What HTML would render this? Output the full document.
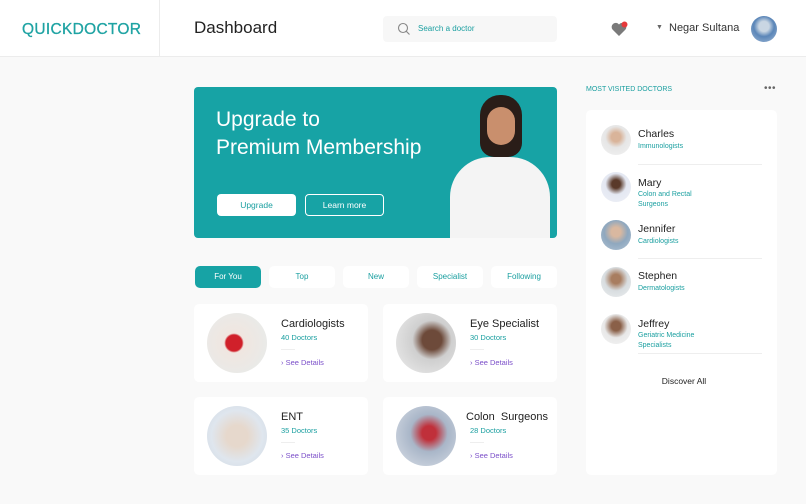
<!DOCTYPE html><html><head><style>
*{margin:0;padding:0;box-sizing:border-box}
body{width:806px;height:504px;background:#f9f9f9;font-family:"Liberation Sans",sans-serif;position:relative;overflow:hidden;color:#222}
.a{position:absolute}
.t{color:#1a9fa0}
.circ{position:absolute;border-radius:50%;overflow:hidden}
.tab{position:absolute;top:266px;width:66px;height:22px;border-radius:5px;background:#fff;color:#1a9fa0;font-size:8px;text-align:center;line-height:22px}
.card{position:absolute;width:174px;height:78px;background:#fff;border-radius:5px}
.card .ttl{position:absolute;left:87px;top:14px;font-size:11px;color:#222}
.card .sub{position:absolute;left:87px;top:29px;font-size:7.5px;color:#1a9fa0}
.card .ln{position:absolute;left:87px;top:45px;width:14px;height:1px;background:#eee}
.card .sd{position:absolute;left:87px;top:54px;font-size:7.5px;color:#7b4fc9}
.card .img{position:absolute;left:13px;top:9px;width:60px;height:60px;border-radius:50%}
.doc .n{position:absolute;left:638px;font-size:10.5px;color:#222}
.doc .s{position:absolute;left:638px;font-size:7px;color:#1a9fa0;line-height:10px}
.hr{position:absolute;left:638px;width:124px;height:1px;background:#eee}
</style></head><body>
<div class="a" style="left:0;top:0;width:806px;height:57px;background:#fff;border-bottom:1px solid #ececec"></div>
<div class="a" style="left:159px;top:0;width:1px;height:57px;background:#ececec"></div>
<div class="a t" style="left:22px;top:21px;font-size:15.5px;letter-spacing:0.3px;color:#1fa3a3;-webkit-text-stroke:0.3px #1fa3a3">QUICKDOCTOR</div>
<div class="a" style="left:194px;top:18px;font-size:17px;color:#222">Dashboard</div>
<div class="a" style="left:383px;top:16px;width:174px;height:26px;background:#f7f7f7;border-radius:4px"></div>
<svg class="a" style="left:397px;top:22px" width="14" height="14" viewBox="0 0 14 14"><circle cx="6" cy="6" r="4.5" fill="none" stroke="#888" stroke-width="1.1"/><line x1="9.3" y1="9.3" x2="12.5" y2="12.5" stroke="#888" stroke-width="1.1"/></svg>
<div class="a t" style="left:418px;top:24px;font-size:8px">Search a doctor</div>
<svg class="a" style="left:611px;top:21px" width="18" height="16" viewBox="0 0 18 16"><path d="M8 15 L1.5 8.5 A3.8 3.8 0 0 1 8 3.5 A3.8 3.8 0 0 1 14.5 8.5Z" fill="#7a7a7a"/><circle cx="13.5" cy="3.5" r="3" fill="#e5393b"/></svg>
<div class="a" style="left:656px;top:24px;font-size:7px;color:#666">▼</div>
<div class="a" style="left:669px;top:22px;font-size:11px;color:#333">Negar Sultana</div>
<div class="circ" style="left:751px;top:16px;width:26px;height:26px;background:radial-gradient(circle at 50% 40%,#c9d6e3 0 25%,#5b86b8 50%,#9fb8d6 100%)"></div>

<div class="a" style="left:194px;top:87px;width:363px;height:151px;background:#17a3a5;border-radius:4px;overflow:hidden">
<div class="a" style="left:22px;top:19px;color:#fff;font-size:21px;line-height:28px">Upgrade to<br>Premium Membership</div>
<div class="a" style="left:23px;top:107px;width:79px;height:22px;background:#fff;border-radius:4px;color:#1a9fa0;font-size:8.5px;text-align:center;line-height:22px">Upgrade</div>
<div class="a" style="left:111px;top:107px;width:79px;height:22px;border:1.2px solid #fff;border-radius:4px;color:#fff;font-size:8.5px;text-align:center;line-height:20px">Learn more</div>
<div class="a" style="left:256px;top:70px;width:100px;height:90px;background:#f4f4f4;border-radius:40px 40px 0 0"></div>
<div class="a" style="left:286px;top:8px;width:42px;height:62px;background:#2a1d18;border-radius:20px 20px 14px 14px"></div>
<div class="a" style="left:293px;top:20px;width:28px;height:38px;background:#c98f6d;border-radius:14px"></div>
</div>

<div class="tab" style="left:195px;background:#17a3a5;color:#fff">For You</div>
<div class="tab" style="left:269px">Top</div>
<div class="tab" style="left:343px">New</div>
<div class="tab" style="left:417px">Specialist</div>
<div class="tab" style="left:491px">Following</div>

<div class="card" style="left:194px;top:304px"><div class="img" style="background:radial-gradient(circle at 45% 50%,#d0202a 0 18%,#f0e6e0 22%,#e6ecec 100%)"></div><div class="ttl">Cardiologists</div><div class="sub">40 Doctors</div><div class="ln"></div><div class="sd">› See Details</div></div>
<div class="card" style="left:383px;top:304px"><div class="img" style="background:radial-gradient(circle at 60% 45%,#6d4a3a 0 20%,#cfcfcf 40%,#eeeeee 100%)"></div><div class="ttl">Eye Specialist</div><div class="sub">30 Doctors</div><div class="ln"></div><div class="sd">› See Details</div></div>
<div class="card" style="left:194px;top:397px"><div class="img" style="background:radial-gradient(circle at 50% 50%,#e6d8cc 0 25%,#dfe6ee 60%,#cfd8e2 100%)"></div><div class="ttl">ENT</div><div class="sub">35 Doctors</div><div class="ln"></div><div class="sd">› See Details</div></div>
<div class="card" style="left:383px;top:397px"><div class="img" style="background:radial-gradient(circle at 55% 45%,#c0303a 0 15%,#a9b6c8 40%,#dbe0e8 100%)"></div><div class="ttl" style="left:83px">Colon &nbsp;Surgeons</div><div class="sub">28 Doctors</div><div class="ln"></div><div class="sd">› See Details</div></div>

<div class="a t" style="left:586px;top:86px;font-size:7px">MOST VISITED DOCTORS</div>
<div class="a" style="left:764px;top:83px;font-size:10px;color:#666;letter-spacing:0.5px">•••</div>
<div class="a" style="left:586px;top:110px;width:191px;height:365px;background:#fff;border-radius:5px"></div>
<div class="doc">
<div class="circ" style="left:601px;top:125px;width:30px;height:30px;background:radial-gradient(circle at 50% 40%,#d9b49a 0 20%,#e6e6e6 45%,#f2f2f2)"></div>
<div class="n" style="top:128px">Charles</div><div class="s" style="top:142px">Immunologists</div>
<div class="hr" style="top:164px"></div>
<div class="circ" style="left:601px;top:172px;width:30px;height:30px;background:radial-gradient(circle at 50% 40%,#5a3a2a 0 18%,#e4e8f2 45%,#eef0f6)"></div>
<div class="n" style="top:177px">Mary</div><div class="s" style="top:190px">Colon and Rectal<br>Surgeons</div>
<div class="circ" style="left:601px;top:220px;width:30px;height:30px;background:radial-gradient(circle at 50% 40%,#d9b8a0 0 20%,#8fa8bf 50%,#b0c2d3)"></div>
<div class="n" style="top:223px">Jennifer</div><div class="s" style="top:237px">Cardiologists</div>
<div class="hr" style="top:258px"></div>
<div class="circ" style="left:601px;top:267px;width:30px;height:30px;background:radial-gradient(circle at 50% 40%,#a87d60 0 20%,#d8dde0 50%,#eceeef)"></div>
<div class="n" style="top:270px">Stephen</div><div class="s" style="top:284px">Dermatologists</div>
<div class="circ" style="left:601px;top:314px;width:30px;height:30px;background:radial-gradient(circle at 50% 40%,#8a6048 0 20%,#e8e8e8 50%,#f4f4f4)"></div>
<div class="n" style="top:318px">Jeffrey</div><div class="s" style="top:331px">Geriatric Medicine<br>Specialists</div>
<div class="hr" style="top:353px"></div>
</div>
<div class="a" style="left:586px;top:376px;width:196px;text-align:center;font-size:8.5px;color:#222">Discover All</div>
</body></html>
